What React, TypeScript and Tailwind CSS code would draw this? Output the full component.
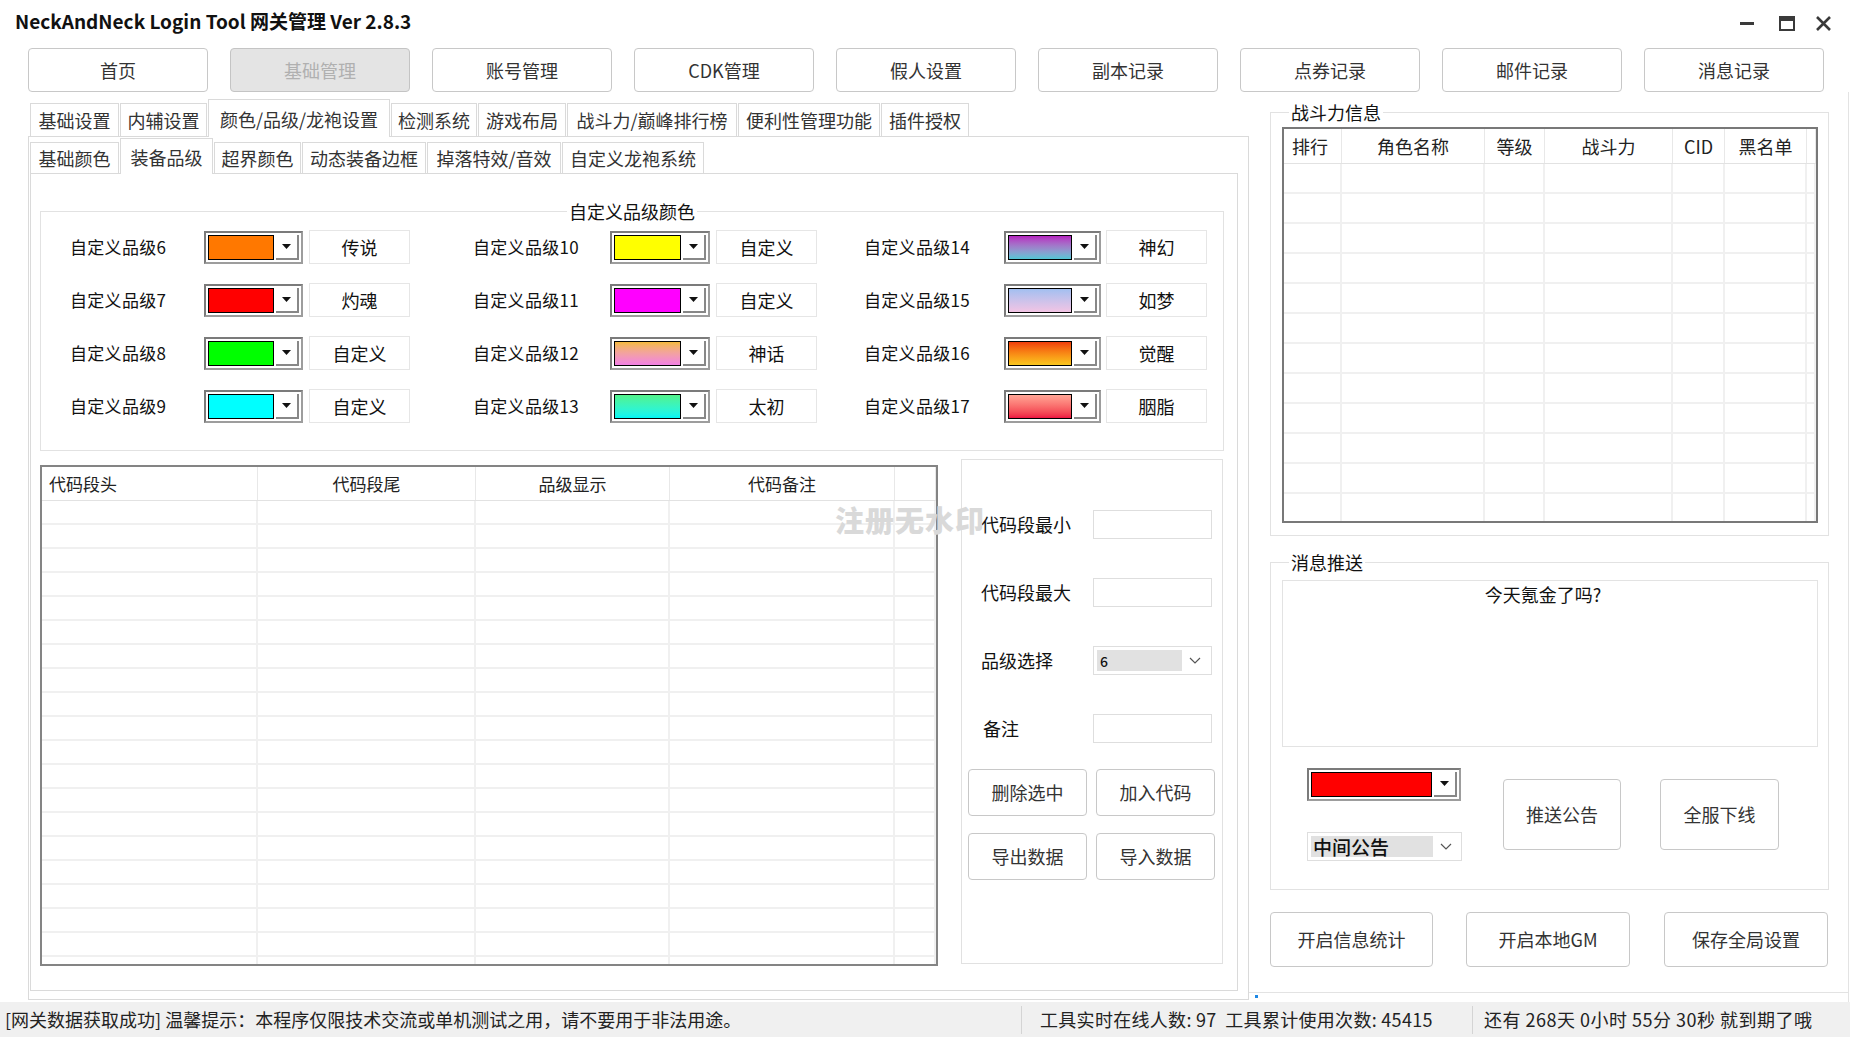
import React from 'react';

type Tab = { label: string; w: string; active?: boolean };
type Grade = { n: number; swatch: string; name: string };
type Col = { label: string; w: string; align?: string };

const navItems = ['首页', '基础管理', '账号管理', 'CDK管理', '假人设置', '副本记录', '点券记录', '邮件记录', '消息记录'];

const outerTabs: Tab[] = [
  { label: '基础设置', w: 'w-[89px]' },
  { label: '内辅设置', w: 'w-[87px]' },
  { label: '颜色/品级/龙袍设置', w: 'w-[182px]', active: true },
  { label: '检测系统', w: 'w-[86px]' },
  { label: '游戏布局', w: 'w-[88px]' },
  { label: '战斗力/巅峰排行榜', w: 'w-[170px]' },
  { label: '便利性管理功能', w: 'w-[142px]' },
  { label: '插件授权', w: 'w-[88px]' },
];

const innerTabs: Tab[] = [
  { label: '基础颜色', w: 'w-[89px]' },
  { label: '装备品级', w: 'w-[93px]', active: true },
  { label: '超界颜色', w: 'w-[87px]' },
  { label: '动态装备边框', w: 'w-[124px]' },
  { label: '掉落特效/音效', w: 'w-[134px]' },
  { label: '自定义龙袍系统', w: 'w-[142px]' },
];

// three columns of custom grade colours
const gradeCols: { grades: Grade[]; colW: string; labelW: string; comboW: string; gap: string }[] = [
  {
    colW: 'w-[403px]',
    labelW: 'w-[134px]',
    comboW: 'w-[99px]',
    gap: 'ml-[6px]',
    grades: [
      { n: 6, swatch: 'bg-[#ff7800]', name: '传说' },
      { n: 7, swatch: 'bg-[#ff0000]', name: '灼魂' },
      { n: 8, swatch: 'bg-[#00ff00]', name: '自定义' },
      { n: 9, swatch: 'bg-[#00ffff]', name: '自定义' },
    ],
  },
  {
    colW: 'w-[391px]',
    labelW: 'w-[137px]',
    comboW: 'w-[100px]',
    gap: 'ml-[6px]',
    grades: [
      { n: 10, swatch: 'bg-[#ffff00]', name: '自定义' },
      { n: 11, swatch: 'bg-[#ff00ff]', name: '自定义' },
      { n: 12, swatch: 'bg-linear-to-b from-[#f4b93a] to-[#f27fe4]', name: '神话' },
      { n: 13, swatch: 'bg-linear-to-b from-[#52f28a] to-[#00f6f4]', name: '太初' },
    ],
  },
  {
    colW: 'w-[350px]',
    labelW: 'w-[140px]',
    comboW: 'w-[97px]',
    gap: 'ml-[5px]',
    grades: [
      { n: 14, swatch: 'bg-linear-to-b from-[#b41ec0] to-[#4ec6d4]', name: '神幻' },
      { n: 15, swatch: 'bg-linear-to-b from-[#a2bff0] to-[#f2c4e4]', name: '如梦' },
      { n: 16, swatch: 'bg-linear-to-b from-[#f03c0c] to-[#f8c61f]', name: '觉醒' },
      { n: 17, swatch: 'bg-linear-to-b from-[#ffa596] to-[#ee1042]', name: '胭脂' },
    ],
  },
];

const codeCols: Col[] = [
  { label: '代码段头', w: 'w-[216px]', align: 'justify-start pl-[7px]' },
  { label: '代码段尾', w: 'w-[218px]', align: 'justify-center' },
  { label: '品级显示', w: 'w-[194px]', align: 'justify-center' },
  { label: '代码备注', w: 'w-[225px]', align: 'justify-center' },
  { label: '', w: 'flex-1', align: '' },
];

const rankCols: Col[] = [
  { label: '排行', w: 'w-[58px]', align: 'justify-start pl-[8px]' },
  { label: '角色名称', w: 'w-[143px]', align: 'justify-center' },
  { label: '等级', w: 'w-[60px]', align: 'justify-center' },
  { label: '战斗力', w: 'w-[128px]', align: 'justify-center' },
  { label: 'CID', w: 'w-[52px]', align: 'justify-center' },
  { label: '黑名单', w: 'w-[82px]', align: 'justify-center' },
  { label: '', w: 'flex-1', align: '' },
];

function WindowControls() {
  return (
    <svg width="92" height="16" viewBox="0 0 92 16" className="mt-[8px]">
      <rect x="0" y="6" width="14" height="3" fill="#3a3a3a" />
      <rect x="40" y="1" width="14" height="13" fill="none" stroke="#3a3a3a" strokeWidth="2" />
      <rect x="39" y="0" width="16" height="5" fill="#3a3a3a" />
      <path d="M77 1 L90 14 M90 1 L77 14" stroke="#3a3a3a" strokeWidth="2.6" />
    </svg>
  );
}

function Caret() {
  return (
    <svg width="9" height="5" viewBox="0 0 9 5">
      <path d="M0 0 H9 L4.5 5 Z" fill="#111" />
    </svg>
  );
}

function Chevron() {
  return (
    <svg width="12" height="7" viewBox="0 0 12 7">
      <path d="M1 1 L6 6 L11 1" fill="none" stroke="#555" strokeWidth="1.2" />
    </svg>
  );
}

function ColorCombo({ swatch, w }: { swatch: string; w: string }) {
  return (
    <div
      className={`${w} flex h-[33px] border-2 border-t-[#7b7b7b] border-l-[#7b7b7b] border-b-[#9d9d9d] border-r-[#9d9d9d] bg-white p-[2px]`}
    >
      <div className={`flex-1 border border-black ${swatch}`} />
      <div className="ml-[2px] flex w-[23px] items-center justify-center border-r-2 border-b-2 border-r-[#888] border-b-[#888] bg-white">
        <Caret />
      </div>
    </div>
  );
}

function TabStrip({ tabs, h, activeH }: { tabs: Tab[]; h: string; activeH: string }) {
  return (
    <>
      {tabs.map(t => (
        <div
          key={t.label}
          className={`${t.w} flex items-center justify-center border-x border-t border-[#dadada] bg-white text-[18px] leading-none text-[#333] ${
            t.active ? `${activeH} relative z-10 -mb-px` : h
          }`}
        >
          {t.label}
        </div>
      ))}
    </>
  );
}

function PlainButton({ label, className }: { label: string; className: string }) {
  return (
    <button
      className={`${className} flex items-center justify-center rounded-[4px] border border-[#c8c8c8] bg-white text-[18px] text-[#333]`}
    >
      {label}
    </button>
  );
}

function LeftPane() {
  return (
    <div className="ml-[28px] flex w-[1221px] flex-col">
      <div className="mt-[7px] flex h-[37px] items-end gap-[1px] pl-[2px]">
        <TabStrip tabs={outerTabs} h="h-[33px]" activeH="h-[38px]" />
      </div>
      <div className="h-[864px] border border-[#dadada] bg-white">
        <div className="mt-[1px] flex h-[35px] items-end gap-[1px] pl-[1px]">
          <TabStrip tabs={innerTabs} h="h-[31px]" activeH="h-[36px]" />
        </div>
        <div className="ml-[1px] h-[818px] w-[1208px] border border-[#dadada] bg-white">
          {/* custom grade colours */}
          <fieldset className="ml-[9px] mt-[25px] h-[252px] w-[1184px] min-w-0 border border-[#e2e2e2]">
            <legend className="mx-auto px-[2px] text-[18px] leading-[24px] text-[#111]">自定义品级颜色</legend>
            <div className="flex pl-[29px] pt-[7px]">
              {gradeCols.map(col => (
                <div key={col.colW} className={`${col.colW} flex flex-col gap-[19px]`}>
                  {col.grades.map(g => (
                    <div key={g.n} className="flex h-[34px] items-center">
                      <span className={`${col.labelW} text-[17px] tracking-[0.3px] text-[#111]`}>自定义品级{g.n}</span>
                      <ColorCombo swatch={g.swatch} w={col.comboW} />
                      <div
                        className={`${col.gap} flex h-[34px] w-[101px] items-center justify-center border border-[#e6e6e6] text-[18px] text-[#111]`}
                      >
                        {g.name}
                      </div>
                    </div>
                  ))}
                </div>
              ))}
            </div>
          </fieldset>

          <div className="ml-[9px] mt-[8px] flex items-start">
            {/* code segment list */}
            <div className="mt-[6px] h-[501px] w-[898px] overflow-hidden border-2 border-[#848484] bg-white">
              <div className="flex h-[34px] border-b border-[#e2e2e2]">
                {codeCols.map((c, i) => (
                  <div
                    key={i}
                    className={`${c.w} flex items-center border-r border-[#e8e8e8] text-[17px] text-[#222] ${c.align}`}
                  >
                    {c.label}
                  </div>
                ))}
              </div>
              {Array.from({ length: 20 }).map((_, r) => (
                <div key={r} className="flex h-[24px] border-b-2 border-[#f0f0f0]">
                  {codeCols.map((c, i) => (
                    <div key={i} className={`${c.w} border-r-2 border-[#f0f0f0]`} />
                  ))}
                </div>
              ))}
            </div>

            {/* code segment editor */}
            <div className="ml-[23px] h-[505px] w-[262px] border border-[#e1e1e1] bg-white pt-[50px]">
              <div className="flex flex-col gap-[39px]">
                <div className="flex h-[29px] items-center pl-[19px]">
                  <span className="w-[112px] text-[18px] text-[#111]">代码段最小</span>
                  <div className="h-[29px] w-[119px] border border-[#dedede]" />
                </div>
                <div className="flex h-[29px] items-center pl-[19px]">
                  <span className="w-[112px] text-[18px] text-[#111]">代码段最大</span>
                  <div className="h-[29px] w-[119px] border border-[#dedede]" />
                </div>
                <div className="flex h-[29px] items-center pl-[19px]">
                  <span className="w-[112px] text-[18px] text-[#111]">品级选择</span>
                  <div className="flex h-[29px] w-[119px] items-center border border-[#dedede] p-[3px]">
                    <div className="flex h-full w-[85px] items-center bg-[#e1e1e1] pl-[3px] text-[14px] font-medium leading-none text-[#111]">
                      6
                    </div>
                    <div className="flex flex-1 justify-center">
                      <Chevron />
                    </div>
                  </div>
                </div>
                <div className="flex h-[29px] items-center pl-[21px]">
                  <span className="w-[110px] text-[18px] text-[#111]">备注</span>
                  <div className="h-[29px] w-[119px] border border-[#dedede]" />
                </div>
              </div>
              <div className="mt-[26px] grid grid-cols-[119px_119px] gap-x-[9px] gap-y-[17px] pl-[6px]">
                <PlainButton label="删除选中" className="h-[47px] w-[119px]" />
                <PlainButton label="加入代码" className="h-[47px] w-[119px]" />
                <PlainButton label="导出数据" className="h-[47px] w-[119px]" />
                <PlainButton label="导入数据" className="h-[47px] w-[119px]" />
              </div>
            </div>
          </div>
        </div>
      </div>
    </div>
  );
}

function RightPane() {
  return (
    <div className="flex w-[600px] flex-col border-r border-[#e3e3e3]">
      {/* power ranking */}
      <fieldset className="ml-[21px] mt-[8px] h-[436px] w-[559px] min-w-0 border border-[#e2e2e2]">
        <legend className="ml-[18px] px-[2px] text-[18px] leading-[24px] text-[#111]">战斗力信息</legend>
        <div className="ml-[11px] mt-[3px] h-[396px] w-[536px] overflow-hidden border-2 border-[#787878] bg-white">
          <div className="flex h-[35px] border-b border-[#e2e2e2]">
            {rankCols.map((c, i) => (
              <div
                key={i}
                className={`${c.w} flex items-center border-r border-[#e8e8e8] text-[18px] text-[#222] ${c.align}`}
              >
                {c.label}
              </div>
            ))}
          </div>
          {Array.from({ length: 12 }).map((_, r) => (
            <div key={r} className="flex h-[30px] border-b-2 border-[#f0f0f0]">
              {rankCols.map((c, i) => (
                <div key={i} className={`${c.w} border-r-2 border-[#f0f0f0]`} />
              ))}
            </div>
          ))}
        </div>
      </fieldset>

      {/* broadcast */}
      <fieldset className="ml-[21px] mt-[14px] h-[340px] w-[559px] min-w-0 border border-[#e2e2e2]">
        <legend className="ml-[18px] px-[2px] text-[18px] leading-[24px] text-[#111]">消息推送</legend>
        <div className="ml-[11px] mt-[6px] flex h-[167px] w-[536px] justify-center border border-[#e3e3e3] pr-[14px] text-[18px] leading-[26px] text-[#111]">
          今天氪金了吗?
        </div>
        <div className="ml-[36px] mt-[21px] flex items-start">
          <div className="flex w-[155px] flex-col">
            <ColorCombo swatch="bg-[#ff0000]" w="w-[154px]" />
            <div className="mt-[31px] flex h-[29px] w-[155px] items-center border border-[#dedede] p-[3px]">
              <div className="flex h-full w-[122px] items-center bg-[#e1e1e1] pl-[2px] text-[19px] font-medium leading-none text-[#111]">
                中间公告
              </div>
              <div className="flex flex-1 justify-center">
                <Chevron />
              </div>
            </div>
          </div>
          <PlainButton label="推送公告" className="ml-[41px] mt-[11px] h-[71px] w-[118px]" />
          <PlainButton label="全服下线" className="ml-[39px] mt-[11px] h-[71px] w-[119px]" />
        </div>
      </fieldset>

      <div className="ml-[21px] mt-[22px] flex">
        <PlainButton label="开启信息统计" className="h-[55px] w-[163px]" />
        <PlainButton label="开启本地GM" className="ml-[33px] h-[55px] w-[164px]" />
        <PlainButton label="保存全局设置" className="ml-[34px] h-[55px] w-[164px]" />
      </div>

      <div className="mt-[25px] h-[4px] border-t border-[#e3e3e3] pl-[6px]">
        <div className="mt-[2px] h-[3px] w-[3px] bg-[#1e88e5]" />
      </div>
    </div>
  );
}

function StatusBar() {
  return (
    <div className="flex h-[35px] shrink-0 items-center bg-[#f0f0f0] text-[18px] text-[#222]">
      <div className="w-[1021px] pl-[5px]">[网关数据获取成功] 温馨提示：本程序仅限技术交流或单机测试之用，请不要用于非法用途。</div>
      <div className="h-[28px] border-l border-[#d4d4d4]" />
      <div className="w-[450px] pl-[18px] tracking-[0.3px]">工具实时在线人数: 97&nbsp;&nbsp;工具累计使用次数: 45415</div>
      <div className="h-[28px] border-l border-[#d4d4d4]" />
      <div className="pl-[11px] tracking-[0.5px]">还有 268天 0小时 55分 30秒 就到期了哦</div>
    </div>
  );
}

export default function App() {
  return (
    <div className="relative flex h-[1037px] w-[1850px] flex-col overflow-hidden bg-white font-['Noto_Sans_CJK_SC',sans-serif] text-[#222]">
      <div className="flex h-[40px] shrink-0 items-center justify-between pl-[15px] pr-[18px]">
        <span className="text-[19px] font-bold leading-none text-[#111]">NeckAndNeck Login Tool 网关管理 Ver 2.8.3</span>
        <WindowControls />
      </div>

      <div className="mt-[8px] flex h-[44px] shrink-0 gap-[22px] pl-[28px]">
        {navItems.map((item, i) =>
          i === 1 ? (
            <div
              key={item}
              className="flex w-[180px] items-center justify-center rounded-[4px] border border-[#c4c4c4] bg-[#e4e4e4] text-[18px] text-[#b0b0b0]"
            >
              {item}
            </div>
          ) : (
            <PlainButton key={item} label={item} className="w-[180px]" />
          )
        )}
      </div>

      <div className="flex h-[910px] shrink-0">
        <LeftPane />
        <RightPane />
      </div>

      <StatusBar />

      {/* unregistered build watermark */}
      <div className="pointer-events-none absolute left-[835px] top-[500px] text-[29px] font-black leading-[38px] tracking-[1px] text-[#d9d9d9]">
        注册无水印
      </div>
    </div>
  );
}
